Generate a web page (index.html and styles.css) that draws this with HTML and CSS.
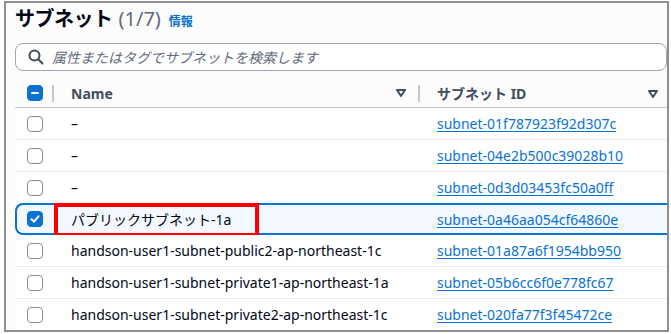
FILE: index.html
```html
<!DOCTYPE html>
<html lang="ja">
<head>
<meta charset="utf-8">
<link rel="stylesheet" href="styles.css">
</head>
<body>
<div class="frame">
  <div class="title-row">
    <h1 class="title">サブネット</h1>
    <span class="count">(1/7)</span>
    <a class="info">情報</a>
  </div>
  <div class="search">
    <svg class="search-icon" width="16" height="16" viewBox="0 0 16 16"><circle cx="6.5" cy="6.5" r="5" fill="none" stroke="#414d5c" stroke-width="2"/><line x1="10.2" y1="10.2" x2="14.5" y2="14.5" stroke="#414d5c" stroke-width="2" stroke-linecap="round"/></svg>
    <span class="placeholder">属性またはタグでサブネットを検索します</span>
  </div>
  <div class="table">
    <div class="row head">
      <div class="cell c-check"><span class="cb cb-ind"><span class="dash"></span></span><span class="sep"></span></div>
      <div class="cell c-name"><span class="hd en">Name</span><svg class="sort" width="12" height="10" viewBox="0 0 12 10"><polygon points="2,2 10,2 6,8" fill="none" stroke="#414d5c" stroke-width="2" stroke-linejoin="round"/></svg><span class="sep"></span></div>
      <div class="cell c-id"><span class="hd">サブネット ID</span><svg class="sort" width="12" height="10" viewBox="0 0 12 10"><polygon points="2,2 10,2 6,8" fill="none" stroke="#414d5c" stroke-width="2" stroke-linejoin="round"/></svg></div>
    </div>
    <div class="row">
      <div class="cell c-check"><span class="cb"></span></div>
      <div class="cell c-name"><span class="en">–</span></div>
      <div class="cell c-id"><a class="link en">subnet-01f787923f92d307c</a></div>
    </div>
    <div class="row">
      <div class="cell c-check"><span class="cb"></span></div>
      <div class="cell c-name"><span class="en">–</span></div>
      <div class="cell c-id"><a class="link en">subnet-04e2b500c39028b10</a></div>
    </div>
    <div class="row pre-sel">
      <div class="cell c-check"><span class="cb"></span></div>
      <div class="cell c-name"><span class="en">–</span></div>
      <div class="cell c-id"><a class="link en">subnet-0d3d03453fc50a0ff</a></div>
    </div>
    <div class="row selected">
      <div class="cell c-check"><span class="cb cb-on"><svg width="12" height="12" viewBox="0 0 12 12"><polyline points="2.5,6.2 5,8.7 9.5,3.3" fill="none" stroke="#fff" stroke-width="2" stroke-linecap="round" stroke-linejoin="round"/></svg></span></div>
      <div class="cell c-name"><span>パブリックサブネット<span class="en">-1a</span></span></div>
      <div class="cell c-id"><a class="link en">subnet-0a46aa054cf64860e</a></div>
      <div class="highlight"></div>
    </div>
    <div class="row">
      <div class="cell c-check"><span class="cb"></span></div>
      <div class="cell c-name"><span class="en">handson-user1-subnet-public2-ap-northeast-1c</span></div>
      <div class="cell c-id"><a class="link en">subnet-01a87a6f1954bb950</a></div>
    </div>
    <div class="row">
      <div class="cell c-check"><span class="cb"></span></div>
      <div class="cell c-name"><span class="en">handson-user1-subnet-private1-ap-northeast-1a</span></div>
      <div class="cell c-id"><a class="link en">subnet-05b6cc6f0e778fc67</a></div>
    </div>
    <div class="row">
      <div class="cell c-check"><span class="cb"></span></div>
      <div class="cell c-name"><span class="en">handson-user1-subnet-private2-ap-northeast-1c</span></div>
      <div class="cell c-id"><a class="link en">subnet-020fa77f3f45472ce</a></div>
    </div>
  </div>
</div>
</body>
</html>
```

FILE: styles.css
```css
* { box-sizing: border-box; }
html, body { margin: 0; padding: 0; background: #fff; }
body {
  font-family: "Noto Sans", "Noto Sans CJK JP", sans-serif;
  font-size: 14px;
  color: #000716;
}
.frame {
  margin: 1px 0 0 4px;
  width: 665px;
  height: 331px;
  border: 2px solid #8f8f8f;
  background: #fcfcfc;
  overflow: hidden;
  padding: 2px 0 0 9px;
}
.title-row {
  display: flex;
  align-items: baseline;
  height: 28px;
  line-height: 28px;
}
.title {
  margin: 0;
  font-size: 20px;
  font-weight: 700;
  letter-spacing: -0.5px;
}
.count {
  margin-left: 6px;
  font-size: 20px;
  color: #5f6b7a;
}
.info {
  margin-left: 8px;
  font-size: 12px;
  font-weight: 700;
  color: #0972d3;
}
.search {
  margin-top: 10px;
  height: 28px;
  width: 652px;
  border: 1px solid #9ba7b6;
  border-radius: 8px;
  background: #fff;
  display: flex;
  align-items: center;
  padding-left: 12px;
}
.search-icon { flex: none; }
.placeholder {
  margin-left: 8px;
  font-style: italic;
  color: #5f6b7a;
  font-size: 14px;
}
.table {
  margin-top: 8px;
  width: 720px;
}
.row {
  position: relative;
  display: flex;
  align-items: center;
  height: 32px;
  border-bottom: 1px solid #e9ebed;
  background: #fff;
}
.row.head {
  height: 29px;
  border-bottom: 1px solid #c6c6cd;
  background: #fcfcfc;
}
.cell {
  position: relative;
  display: flex;
  align-items: center;
  height: 100%;
}
.c-check { width: 39px; padding-left: 12px; }
.c-name { width: 366px; padding-left: 17px; }
.c-id { flex: 1; padding-left: 17px; }
.head .c-name .sort { margin-left: auto; margin-right: 13px; }
.head .c-id .sort { position: absolute; left: 227px; top: 10px; }
.sep {
  position: absolute;
  right: 0;
  top: 6px;
  width: 2px;
  height: 17px;
  background: #c6c6cd;
}
.hd { font-weight: 700; color: #414d5c; }
.en { font-size: 14px; }
.cb {
  display: flex;
  align-items: center;
  justify-content: center;
  width: 16px;
  height: 16px;
  border: 1.5px solid #8c8c94;
  border-radius: 4px;
  background: #fff;
}
.cb-ind, .cb-on { background: #0972d3; border-color: #0972d3; }
.dash { width: 8px; height: 2.5px; background: #fff; border-radius: 1px; }
.link {
  color: #0972d3;
  text-decoration: underline;
  text-underline-offset: 2px;
}
.row.pre-sel { border-bottom: none; height: 31px; }
.row.selected {
  border: 2px solid #0972d3;
  border-right: none;
  border-radius: 8px 0 0 8px;
  background: #f2f8fd;
  height: 32px;
}
.row.selected .c-check { padding-left: 10px; width: 37px; }
.highlight {
  position: absolute;
  left: 37px;
  top: -2px;
  width: 205px;
  height: 34px;
  border: 4px solid #ff0000;
}
```
